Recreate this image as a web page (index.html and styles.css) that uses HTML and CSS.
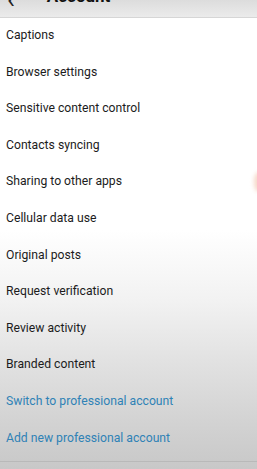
FILE: index.html
```html
<!DOCTYPE html>
<html lang="en">
<head>
    <meta charset="UTF-8">
    <meta name="viewport" content="width=device-width, initial-scale=1.0">
    <title>Account</title>
    <link rel="stylesheet" href="styles.css">
</head>
<body>

    <div class="screen">
        <div class="topbar">
            <span class="back">&lsaquo;</span>
            <span class="title">Account</span>
        </div>

        <ul class="menu">
            <li>Captions</li>
            <li>Browser settings</li>
            <li>Sensitive content control</li>
            <li>Contacts syncing</li>
            <li>Sharing to other apps</li>
            <li>Cellular data use</li>
            <li>Original posts</li>
            <li>Request verification</li>
            <li>Review activity</li>
            <li>Branded content</li>
            <li class="link">Switch to professional account</li>
            <li class="link">Add new professional account</li>
        </ul>

        <div class="divider"></div>

        <div class="glow"></div>
    </div>

</body>
</html>
```

FILE: styles.css
```css
body {
    margin: 0;
    font-family: Roboto, "Liberation Sans", Arial, sans-serif;
    background-color: #c9c9c9;
}
.screen {
    position: relative;
    width: 257px;
    height: 469px;
    overflow: hidden;
    background: linear-gradient(to bottom, #ffffff 0px, #ffffff 230px, #f2f2f2 300px, #e2e2e2 360px, #d3d3d3 420px, #c8c8c8 469px);
}
.topbar {
    display: flex;
    align-items: flex-end;
    height: 17px;
    border-bottom: 1px solid #d6d6d6;
    background: linear-gradient(to bottom, #dcdcdc, #ebebeb);
    overflow: hidden;
}
.topbar .back {
    font-size: 26px;
    line-height: 26px;
    margin-left: 7px;
    margin-bottom: 5px;
    color: #222;
}
.topbar .title {
    font-size: 17px;
    font-weight: bold;
    line-height: 17px;
    margin-left: 32px;
    margin-bottom: 12px;
    color: #111;
}
.menu {
    list-style: none;
    margin: 0;
    padding: 0;
}
.menu li {
    height: 36.6px;
    line-height: 34px;
    padding-left: 6px;
    font-size: 12.2px;
    color: #1c1c1c;
}
.menu li.link {
    color: #2f82b6;
}
.divider {
    margin-top: 4px;
    border-top: 1px solid #b9b9b9;
}
.glow {
    position: absolute;
    right: -6px;
    top: 172px;
    width: 9px;
    height: 20px;
    border-radius: 50%;
    background: #f6d8c8;
    filter: blur(2px);
}
```
